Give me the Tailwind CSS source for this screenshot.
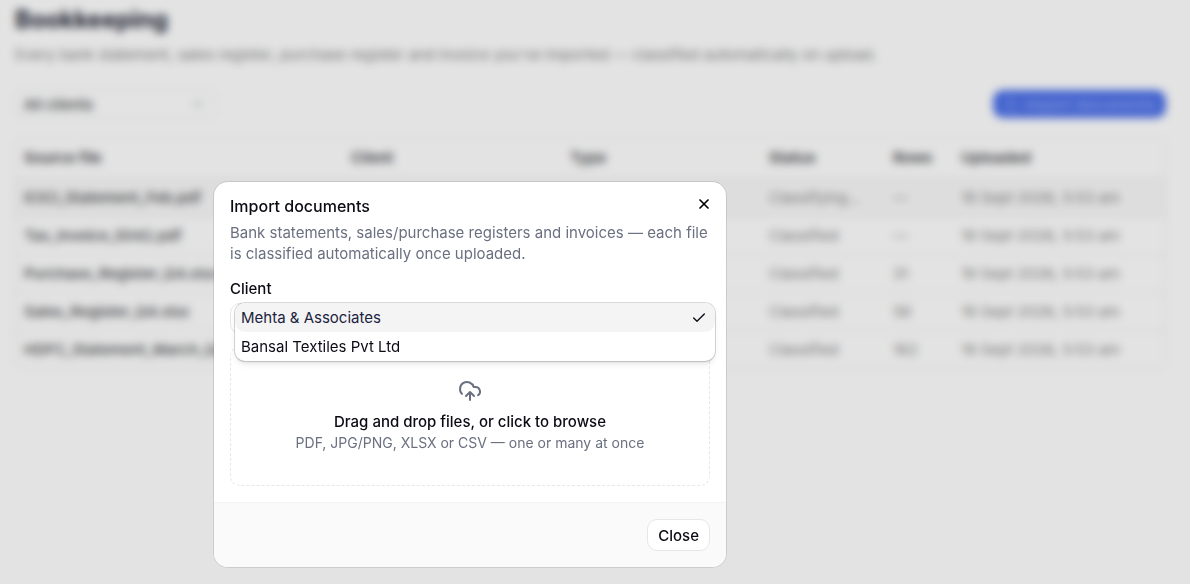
<!DOCTYPE html>
<html lang="en">
<head>
    <meta charset="UTF-8">
    <meta name="viewport" content="width=device-width, initial-scale=1.0">
    <title>Bookkeeping</title>
    <script src="https://cdn.jsdelivr.net/npm/@tailwindcss/browser@4"></script>
</head>
<body class="bg-[#fdfdfd] font-['Inter','Liberation_Sans',sans-serif] text-[15px] leading-[21px] text-[#0b0b14] min-h-screen overflow-hidden">
    <!-- Bookkeeping page -->
    <main class="pl-[15px] pr-6 pt-1 text-[#44464a]">
        <h1 class="text-2xl leading-8 font-bold text-[#1c2233]">Bookkeeping</h1>
        <p class="mt-2 text-[#858585]">Every bank statement, sales register, purchase register and invoice you've imported — classified automatically on upload.</p>
        <div class="mt-6 flex items-center justify-between">
            <button type="button" class="flex h-[30px] w-[200px] items-center justify-between rounded-lg border border-gray-200 px-2 font-medium">
                All clients
                <svg class="size-4 text-gray-400" viewBox="0 0 24 24" fill="none" stroke="currentColor" stroke-width="2" stroke-linecap="round" stroke-linejoin="round"><path d="m6 9 6 6 6-6"/></svg>
            </button>
            <button type="button" class="flex h-7 items-center gap-1.5 rounded-[10px] bg-[#4b6fe7] px-2.5 font-medium text-white/40">
                <svg class="size-4" viewBox="0 0 24 24" fill="none" stroke="currentColor" stroke-width="2" stroke-linecap="round" stroke-linejoin="round"><path d="M12 3v12M17 8l-5-5-5 5M21 15v4a2 2 0 0 1-2 2H5a2 2 0 0 1-2-2v-4"/></svg>
                Import documents
            </button>
        </div>

        <div class="mt-[18px] overflow-hidden rounded-lg border border-gray-200">
            <table class="w-full table-fixed text-left">
                <colgroup>
                    <col>
                    <col class="w-[219px]">
                    <col class="w-[199px]">
                    <col class="w-[124px]">
                    <col class="w-[68px]">
                    <col class="w-[212px]">
                </colgroup>
                <thead>
                    <tr class="h-10 border-b border-gray-200">
                        <th class="px-2 font-semibold">Source file</th>
                        <th class="px-2 font-semibold">Client</th>
                        <th class="px-2 font-semibold">Type</th>
                        <th class="px-2 font-semibold">Status</th>
                        <th class="px-2 font-semibold">Rows</th>
                        <th class="px-2 font-semibold">Uploaded</th>
                    </tr>
                </thead>
                <tbody class="text-[#858585]">
                    <tr class="h-[38px] border-b border-gray-200 bg-[#f7f7f7]">
                        <td class="px-2 font-medium text-[#44464a]">ICICI_Statement_Feb.pdf</td>
                        <td class="px-2"></td>
                        <td class="px-2"></td>
                        <td class="px-2">Classifying…</td>
                        <td class="px-2">—</td>
                        <td class="px-2">19 Sept 2026, 5:53 am</td>
                    </tr>
                    <tr class="h-[38px] border-b border-gray-200">
                        <td class="px-2 font-medium text-[#44464a]">Tax_Invoice_5042.pdf</td>
                        <td class="px-2"></td>
                        <td class="px-2"></td>
                        <td class="px-2">Classified</td>
                        <td class="px-2">—</td>
                        <td class="px-2">19 Sept 2026, 5:53 am</td>
                    </tr>
                    <tr class="h-[38px] border-b border-gray-200">
                        <td class="px-2 font-medium text-[#44464a]">Purchase_Register_Q4.xlsx</td>
                        <td class="px-2"></td>
                        <td class="px-2"></td>
                        <td class="px-2">Classified</td>
                        <td class="px-2">31</td>
                        <td class="px-2">19 Sept 2026, 5:53 am</td>
                    </tr>
                    <tr class="h-[38px] border-b border-gray-200">
                        <td class="px-2 font-medium text-[#44464a]">Sales_Register_Q4.xlsx</td>
                        <td class="px-2"></td>
                        <td class="px-2"></td>
                        <td class="px-2">Classified</td>
                        <td class="px-2">58</td>
                        <td class="px-2">19 Sept 2026, 5:53 am</td>
                    </tr>
                    <tr class="h-[38px]">
                        <td class="px-2 font-medium text-[#44464a]">HDFC_Statement_March_Q4.pdf</td>
                        <td class="px-2"></td>
                        <td class="px-2"></td>
                        <td class="px-2">Classified</td>
                        <td class="px-2">162</td>
                        <td class="px-2">19 Sept 2026, 5:53 am</td>
                    </tr>
                </tbody>
            </table>
        </div>
    </main>

    <!-- Import dialog -->
    <div class="fixed inset-0 bg-black/10 backdrop-blur-xs pl-[214px] pt-[182px]">
        <div role="dialog" aria-labelledby="dialog-title" class="relative w-full max-w-lg rounded-[14px] bg-white ring-1 ring-black/10">
            <div class="p-4">
                <h2 id="dialog-title" class="text-base leading-4 font-medium">Import documents</h2>
                <p class="mt-2 text-[#6b7080]">Bank statements, sales/purchase registers and invoices — each file is classified automatically once uploaded.</p>

                <div class="relative mt-4 flex flex-col gap-1.5">
                    <label for="client" class="leading-[17px] font-medium">Client</label>
                    <select id="client" class="h-[31px] w-full appearance-none rounded-[10px] border border-gray-200 px-2">
                        <option>Mehta &amp; Associates</option>
                        <option>Bansal Textiles Pvt Ltd</option>
                    </select>
                    <!-- Open client list -->
                    <ul role="listbox" class="absolute top-[23px] left-[5px] w-full rounded-[10px] bg-white shadow-md ring-1 ring-black/15">
                        <li role="option" aria-selected="true" class="flex items-center justify-between rounded-[10px] bg-[#f4f4f4] py-1 pl-1.5 pr-2 text-[#1c2340]">
                            Mehta &amp; Associates
                            <svg class="size-4 text-[#0b0b14]" viewBox="0 0 24 24" fill="none" stroke="currentColor" stroke-width="2" stroke-linecap="round" stroke-linejoin="round"><path d="M20 6 9 17l-5-5"/></svg>
                        </li>
                        <li role="option" aria-selected="false" class="rounded-[10px] py-1 pl-1.5 pr-2">Bansal Textiles Pvt Ltd</li>
                    </ul>
                </div>

                <button type="button" class="mt-3 flex w-full flex-col items-center rounded-[10px] border border-dashed border-gray-200 py-8">
                    <svg class="size-6 text-[#6b7080]" viewBox="0 0 24 24" fill="none" stroke="currentColor" stroke-width="2" stroke-linecap="round" stroke-linejoin="round"><path d="M12 13v8M4 14.899A7 7 0 1 1 15.71 8h1.79a4.5 4.5 0 0 1 2.5 8.242M8 17l4-4 4 4"/></svg>
                    <span class="mt-2 font-medium">Drag and drop files, or click to browse</span>
                    <span class="text-sm leading-[21px] text-[#6b7080]">PDF, JPG/PNG, XLSX or CSV — one or many at once</span>
                </button>
            </div>
            <div class="flex justify-end rounded-b-[14px] border-t border-gray-100 bg-[#fafafa] p-4">
                <button type="button" class="h-8 rounded-[10px] border border-gray-200 bg-white px-2.5 font-medium">Close</button>
            </div>
            <button type="button" aria-label="Close dialog" class="absolute top-3.5 right-3.5">
                <svg class="size-4 text-black" viewBox="0 0 24 24" fill="none" stroke="currentColor" stroke-width="2.5" stroke-linecap="round" stroke-linejoin="round"><path d="M18 6 6 18M6 6l12 12"/></svg>
            </button>
        </div>
    </div>
</body>
</html>
